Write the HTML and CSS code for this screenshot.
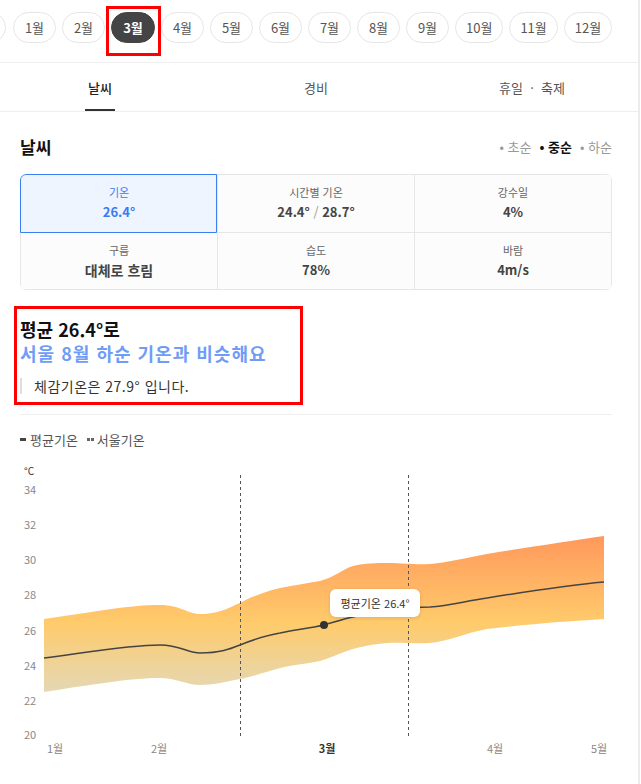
FILE: index.html
```html
<!DOCTYPE html>
<html lang="ko">

<head>
    <meta charset="UTF-8">
    <meta name="viewport" content="width=device-width, initial-scale=1.0">
    <title>서울 3월 날씨</title>
    <link rel="stylesheet" href="styles.css">
</head>

<body>

    <div class="page">
        <div class="month-bar">
            <span class="month month-prev"></span>
            <span class="month">1월</span>
            <span class="month">2월</span>
            <span class="month active">3월</span>
            <span class="month">4월</span>
            <span class="month">5월</span>
            <span class="month">6월</span>
            <span class="month">7월</span>
            <span class="month">8월</span>
            <span class="month">9월</span>
            <span class="month">10월</span>
            <span class="month">11월</span>
            <span class="month">12월</span>
        </div>

        <div class="tabs">
            <div class="tab active"><span>날씨</span></div>
            <div class="tab"><span>경비</span></div>
            <div class="tab"><span>휴일 &nbsp;·&nbsp; 축제</span></div>
        </div>

        <div class="section">
            <div class="section-head">
                <h3>날씨</h3>
                <div class="periods">
                    <span>• 초순</span>
                    <span class="on">• 중순</span>
                    <span>• 하순</span>
                </div>
            </div>

            <div class="stat-grid">
                <div class="stat active">
                    <div class="stat-label">기온</div>
                    <div class="stat-value">26.4°</div>
                </div>
                <div class="stat">
                    <div class="stat-label">시간별 기온</div>
                    <div class="stat-value">24.4° <span class="slash">/</span> 28.7°</div>
                </div>
                <div class="stat">
                    <div class="stat-label">강수일</div>
                    <div class="stat-value">4%</div>
                </div>
                <div class="stat">
                    <div class="stat-label">구름</div>
                    <div class="stat-value text">대체로 흐림</div>
                </div>
                <div class="stat">
                    <div class="stat-label">습도</div>
                    <div class="stat-value">78%</div>
                </div>
                <div class="stat">
                    <div class="stat-label">바람</div>
                    <div class="stat-value">4m/s</div>
                </div>
            </div>

            <div class="summary">
                <p class="summary-title">평균 26.4°로</p>
                <p class="summary-sub">서울 8월 하순 기온과 비슷해요</p>
                <p class="summary-note">체감기온은 27.9° 입니다.</p>
            </div>

            <div class="legend">
                <span class="mark-line"></span>평균기온
                <span class="mark-dots"><i></i><i></i></span>서울기온
            </div>
        </div>

        <div class="chart">
            <svg width="638" height="330" viewBox="0 455 638 330">
                <defs>
                    <linearGradient id="band" x1="0" y1="535" x2="0" y2="692" gradientUnits="userSpaceOnUse">
                        <stop offset="0" stop-color="#ff985c" />
                        <stop offset="0.55" stop-color="#ffcb6b" />
                        <stop offset="1" stop-color="#e4d8b6" />
                    </linearGradient>
                </defs>

                <g class="y-axis">
                    <text x="24" y="474" class="unit">°C</text>
                    <text x="24" y="493">34</text>
                    <text x="24" y="528">32</text>
                    <text x="24" y="563">30</text>
                    <text x="24" y="598">28</text>
                    <text x="24" y="634">26</text>
                    <text x="24" y="669">24</text>
                    <text x="24" y="704">22</text>
                    <text x="24" y="738">20</text>
                </g>

                <path fill="url(#band)" d="M44,618 C100,610 130,604 160,604 C180,604 188,613 200,613 C220,613 230,606 240,602 C255,594 268,590 280,587 C295,584 308,582 320,580 C335,576 343,568 353,565 C365,562 377,562 387,562 C405,562 415,564 430,563 C450,561 465,557 487,553 C530,546 570,540 604,535 L604,618 C570,620 530,623 487,628 C465,632 450,640 430,642 C415,643 400,641 387,642 C375,643 363,645 353,648 C340,652 330,657 320,660 C305,663 292,664 280,667 C265,671 252,676 240,678 C225,681 212,684 200,684 C188,684 175,677 160,677 C130,677 90,684 44,691 Z" />

                <line x1="240.5" y1="474" x2="240.5" y2="736" class="guide" />
                <line x1="408.5" y1="474" x2="408.5" y2="736" class="guide" />

                <path class="mean" d="M44,657 C90,651 130,644 160,644 C180,644 188,652 200,652 C220,652 230,648 240,644 C255,638 268,634 280,632 C295,629 310,627 324,624 C335,621 343,618 353,616 C365,613 377,610 387,609 C405,607 415,606 430,606 C450,605 465,600 487,597 C530,590 570,584 604,581" />
                <circle cx="324" cy="624" r="4" fill="#333" />

                <g class="x-axis">
                    <text x="55" y="752">1월</text>
                    <text x="159" y="752">2월</text>
                    <text x="327" y="752" class="current">3월</text>
                    <text x="495" y="752">4월</text>
                    <text x="599" y="752">5월</text>
                </g>
            </svg>
            <div class="tooltip">평균기온 26.4°</div>
        </div>

        <div class="mark mark-month"></div>
        <div class="mark mark-summary"></div>
    </div>

</body>

</html>
```

FILE: styles.css
```css
body {
    margin: 0;
    background: #fff;
    font-family: "Noto Sans CJK KR", "Noto Sans", sans-serif;
    color: #333;
}

.page {
    position: relative;
    width: 638px;
    height: 784px;
    overflow: hidden;
    border-right: 2px solid #ececec;
}

/* month pills */
.month-bar {
    display: flex;
    gap: 6px;
    padding-top: 12px;
    margin-left: -37px;
    height: 32px;
}

.month {
    flex-shrink: 0;
    display: flex;
    align-items: center;
    justify-content: center;
    min-width: 43px;
    height: 31px;
    padding: 0 10px;
    border: 1px solid #e6e6e6;
    border-radius: 16px;
    box-sizing: border-box;
    font-size: 13px;
    color: #555;
}

.month-prev {
    margin-right: 1px;
}

.month.active {
    min-width: 44px;
    background: #444;
    border-color: #444;
    color: #fff;
    font-weight: bold;
}

/* tabs */
.tabs {
    display: grid;
    grid-template-columns: repeat(3, 216px);
    margin: 18px 0 0 -8px;
    width: 646px;
    border-top: 1px solid #eee;
    border-bottom: 1px solid #eee;
}

.tab {
    display: flex;
    justify-content: center;
    height: 48px;
}

.tab span {
    display: flex;
    align-items: center;
    padding: 0 3px;
    font-size: 13px;
    color: #555;
}

.tab.active span {
    color: #222;
    font-weight: 500;
    border-bottom: 2px solid #333;
    padding-top: 2px;
}

/* weather section */
.section {
    padding: 0 26px 0 20px;
}

.section-head {
    display: flex;
    justify-content: space-between;
    align-items: center;
    padding-top: 22px;
    height: 24px;
}

.section-head h3 {
    margin: 0;
    font-size: 17px;
    font-weight: bold;
    color: #111;
}

.periods {
    display: flex;
    gap: 8px;
    font-size: 13px;
    color: #999;
}

.periods .on {
    color: #111;
    font-weight: bold;
}

.stat-grid {
    display: grid;
    grid-template-columns: repeat(3, 1fr);
    grid-auto-rows: 56.5px;
    gap: 1px;
    padding: 1px;
    margin-top: 16px;
    background: #e6e6e6;
    border-radius: 6px;
    overflow: hidden;
}

.stat {
    position: relative;
    display: flex;
    flex-direction: column;
    align-items: center;
    justify-content: center;
    gap: 2px;
    background: #fcfcfc;
}

.stat.active {
    background: #eef5ff;
}

.stat.active::after {
    content: "";
    position: absolute;
    top: -1px;
    left: -1px;
    right: 0;
    bottom: -1px;
    border: 1px solid #3b7ff3;
    border-top-left-radius: 6px;
}

.stat-label {
    font-size: 11px;
    line-height: 16px;
    color: #666;
}

.stat-value {
    font-size: 13px;
    line-height: 20px;
    font-weight: bold;
    color: #444;
}

.stat-value .slash {
    color: #999;
    font-weight: normal;
}

.stat-value.text {
    font-size: 14px;
}

.stat.active .stat-label,
.stat.active .stat-value {
    color: #3a7cf0;
}

.summary {
    margin-top: 27px;
    padding-bottom: 20px;
    border-bottom: 1px solid #eee;
}

.summary p {
    margin: 0;
}

.summary-title {
    font-size: 18px;
    line-height: 24px;
    font-weight: bold;
    color: #111;
}

.summary-sub {
    font-size: 18px;
    line-height: 24px;
    font-weight: bold;
    letter-spacing: 1px;
    color: #6f9df6;
}

.summary-note {
    margin-top: 13px !important;
    padding-left: 12px;
    border-left: 2px solid #ddd;
    font-size: 14px;
    line-height: 16px;
    letter-spacing: 0.5px;
    color: #333;
}

.legend {
    display: flex;
    align-items: center;
    margin-top: 14px;
    height: 20px;
    font-size: 13px;
    color: #555;
}

.mark-line {
    width: 6px;
    height: 3px;
    margin-right: 4px;
    background: #444;
}

.mark-dots {
    display: flex;
    gap: 1px;
    margin: 0 3px 0 9px;
}

.mark-dots i {
    width: 3px;
    height: 3px;
    background: #666;
}

/* chart */
.chart {
    position: relative;
    margin-top: 7px;
}

.chart svg {
    display: block;
}

.y-axis text {
    font-size: 11px;
    fill: #888;
}

.y-axis .unit {
    fill: #333;
    font-size: 10px;
}

.x-axis text {
    font-size: 11px;
    fill: #888;
    text-anchor: middle;
}

.x-axis .current {
    fill: #333;
    font-weight: bold;
}

.guide {
    stroke: #555;
    stroke-width: 1;
    stroke-dasharray: 3 3;
}

.mean {
    fill: none;
    stroke: #444;
    stroke-width: 1.5;
}

.tooltip {
    position: absolute;
    left: 330px;
    top: 133px;
    width: 90px;
    height: 28px;
    display: flex;
    align-items: center;
    justify-content: center;
    background: #fff;
    border-radius: 6px;
    box-shadow: 0 1px 4px rgba(0, 0, 0, 0.12);
    font-size: 11px;
    color: #333;
}

/* annotation boxes */
.mark {
    position: absolute;
    border: 3px solid #f00;
    box-sizing: border-box;
}

.mark-month {
    left: 106px;
    top: 6px;
    width: 55px;
    height: 50px;
}

.mark-summary {
    left: 14px;
    top: 306px;
    width: 289px;
    height: 99px;
}
```
